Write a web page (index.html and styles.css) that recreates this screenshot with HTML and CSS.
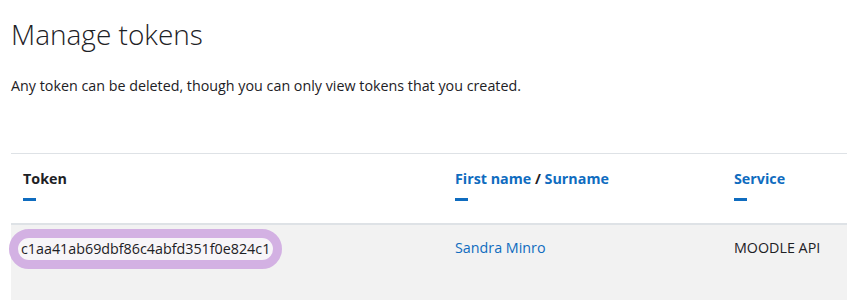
FILE: index.html
```html
<!DOCTYPE html>
<html lang="en">
<head>
  <meta charset="UTF-8">
  <meta name="viewport" content="width=device-width, initial-scale=1.0">
  <title>Manage tokens</title>
  <link rel="stylesheet" href="styles.css">
</head>
<body>
  <h1>Manage tokens</h1>
  <p class="intro">Any token can be deleted, though you can only view tokens that you created.</p>

  <table class="tokens">
    <thead>
      <tr>
        <th class="col-token">Token<span class="sort-mark"></span></th>
        <th class="col-name"><a href="#">First name</a> / <a href="#">Surname</a><span class="sort-mark"></span></th>
        <th class="col-service"><a href="#">Service</a><span class="sort-mark"></span></th>
      </tr>
    </thead>
    <tbody>
      <tr>
        <td class="token-cell"><span class="token-value">c1aa41ab69dbf86c4abfd351f0e824c1</span></td>
        <td><a href="#">Sandra Minro</a></td>
        <td>MOODLE API</td>
      </tr>
    </tbody>
  </table>
</body>
</html>
```

FILE: styles.css
```css
body {
  margin: 0;
  padding: 0 0 0 11px;
  font-family: "Open Sans", "Noto Sans", sans-serif;
  font-size: 14.3px;
  color: #1d2125;
  background: #fff;
  overflow: hidden;
}
h1 {
  margin: 14px 0 0;
  font-size: 28px;
  font-weight: 300;
  line-height: 40px;
}
.intro {
  margin: 22px 0 0;
  line-height: 20px;
}
a {
  color: #0f6cbf;
  text-decoration: none;
}
table.tokens {
  width: 100%;
  table-layout: fixed;
  margin-top: 57px;
  border-collapse: collapse;
}
th, td {
  text-align: left;
  vertical-align: top;
  padding: 0 12px;
}
thead th {
  border-top: 1px solid #dee2e6;
  border-bottom: 2px solid #dee2e6;
  height: 70px;
  padding-top: 15px;
  box-sizing: border-box;
  font-weight: 700;
}
.sort-mark {
  display: block;
  width: 13px;
  height: 3px;
  margin-top: 10px;
  background: #0f6cbf;
}
.col-token { width: 432px; }
.col-name { width: 279px; }
tbody td {
  background: #f2f2f2;
  height: 76px;
  padding-top: 13px;
  box-sizing: border-box;
  white-space: nowrap;
}
tbody td.token-cell {
  padding-top: 4px;
}
.token-value {
  display: inline-block;
  margin-left: -14px;
  padding: 0 3px;
  line-height: 22px;
  background: #f7f5f8;
  border: 9px solid #d3b1e3;
  border-radius: 20px;
}
```
